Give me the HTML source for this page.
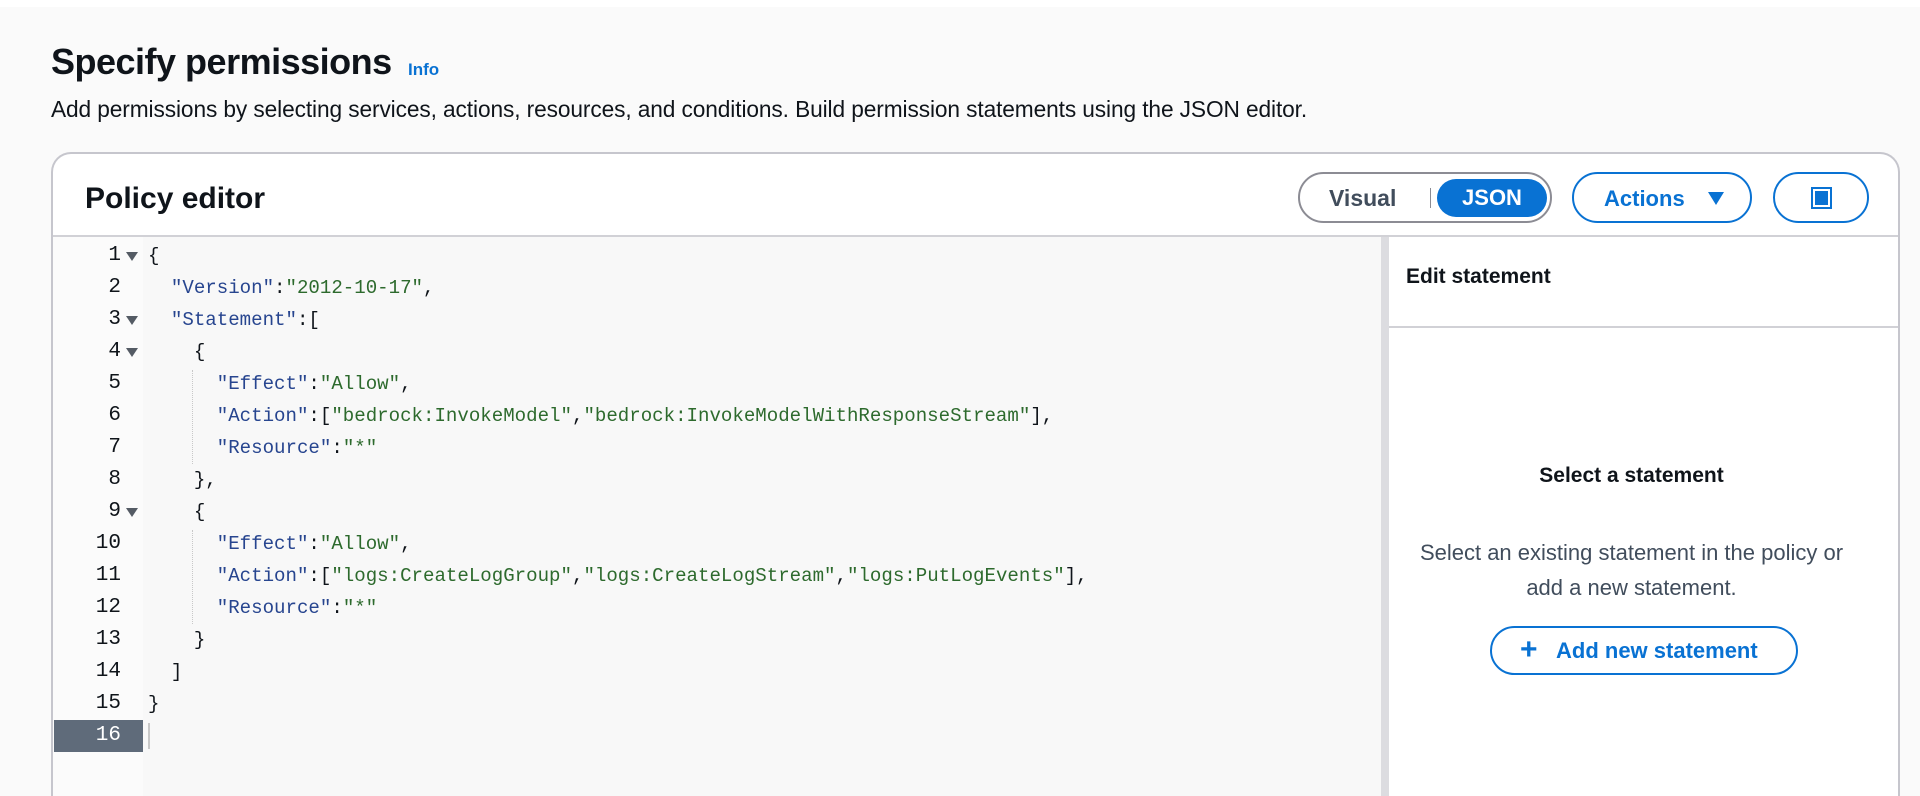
<!DOCTYPE html>
<html><head><meta charset="utf-8"><style>
*{margin:0;padding:0;box-sizing:border-box}
html,body{width:1920px;height:796px;overflow:hidden}
body{background:#fafafa;font-family:"Liberation Sans",sans-serif;color:#0f141a;position:relative}
.top{position:absolute;left:0;top:0;width:1920px;height:7px;background:#fff}
h1{position:absolute;left:51px;top:41px;font-size:36px;font-weight:bold;letter-spacing:-0.5px}
.info{position:absolute;left:408px;top:60px;font-size:17px;font-weight:bold;color:#0972d3}
.sub{position:absolute;left:51px;top:96px;font-size:22.7px;color:#0f141a;letter-spacing:-0.1px}
.panel{position:absolute;left:51px;top:152px;width:1849px;height:644px;background:#fff;border:2px solid #c6c6cd;border-bottom:none;border-radius:20px 20px 0 0;overflow:hidden}
.pt{position:absolute;left:32px;top:28px;font-size:30px;font-weight:bold}
.hdr{position:absolute;left:0;top:81px;width:100%;height:2px;background:#d1d1d6}
.tog{position:absolute;left:1245px;top:18px;width:254px;height:51px;border:2px solid #8c8c94;border-radius:26px}
.tog .v{position:absolute;left:29px;top:11px;font-size:23px;font-weight:bold;color:#414d5c}
.tog .sep{position:absolute;left:130px;top:14px;width:1px;height:20px;background:#8c8c94}
.tog .j{position:absolute;left:137px;top:5px;width:110px;height:38px;border-radius:19px;background:#0972d3;color:#fff;font-size:22px;font-weight:bold;text-align:center;line-height:38px}
.btn{position:absolute;top:18px;height:51px;border:2px solid #0972d3;border-radius:26px;color:#0972d3;font-weight:bold;font-size:22px}
.gut{position:absolute;left:0;top:83px;width:90px;height:562px;background:#fbfbfb}
.code{position:absolute;left:90px;top:83px;width:1238px;height:562px;background:#f8f8f8}
.sb{position:absolute;left:1328px;top:83px;width:8px;height:562px;background:#dcdce0}
.ln{position:absolute;left:0;width:68px;text-align:right;font-family:"Liberation Mono",monospace;font-size:21px;color:#0f141a;height:32px;line-height:32px}
.arr{position:absolute;left:73px;width:0;height:0;border-left:6px solid transparent;border-right:6px solid transparent;border-top:9px solid #545b64}
.cl{position:absolute;left:95px;font-family:"Liberation Mono",monospace;font-size:19.1px;height:32px;line-height:32px;white-space:pre;color:#0f141a}
.k{color:#27458f}.s{color:#2d6a2d}
.guide{position:absolute;left:139px;width:1px;border-left:1px dotted #c8c8c8}
.rp{position:absolute;left:1336px;top:83px;width:513px;height:562px;background:#fff}
</style></head><body>
<div class="top"></div>
<h1>Specify permissions</h1>
<div class="info">Info</div>
<div class="sub">Add permissions by selecting services, actions, resources, and conditions. Build permission statements using the JSON editor.</div>
<div class="panel">
<div class="pt">Policy editor</div>
<div class="tog"><span class="v">Visual</span><span class="sep"></span><span class="j">JSON</span></div>
<div class="btn" style="left:1519px;width:180px"><span style="position:absolute;left:30px;top:12px">Actions</span><span style="position:absolute;left:134px;top:18px;border-left:8px solid transparent;border-right:8px solid transparent;border-top:13px solid #0972d3"></span></div>
<div class="btn" style="left:1720px;width:96px"><span style="position:absolute;left:36px;top:13px;width:21px;height:22px;border:2px solid #0972d3"></span><span style="position:absolute;left:40px;top:17px;width:13px;height:14px;background:#0972d3"></span></div>
<div class="hdr"></div>
<div class="gut"></div>
<div class="code"></div>
<div class="sb"></div>
<div class="rp">
<div style="position:absolute;left:17px;top:28px;font-size:21px;font-weight:bold">Edit statement</div>
<div style="position:absolute;left:0;top:89px;width:100%;height:2px;background:#d1d1d6"></div>
<div style="position:absolute;left:0;top:227px;width:485px;text-align:center;font-size:21px;font-weight:bold">Select a statement</div>
<div style="position:absolute;left:0;top:298px;width:485px;text-align:center;font-size:22px;line-height:35px;color:#414d5c">Select an existing statement in the policy or<br>add a new statement.</div>
<div style="position:absolute;left:101px;top:389px;width:308px;height:49px;border:2px solid #0972d3;border-radius:25px;color:#0972d3;font-weight:bold;font-size:22px"><span style="position:absolute;left:28px;top:6px;font-size:30px;line-height:32px">+</span><span style="position:absolute;left:64px;top:10px">Add new statement</span></div>
</div>
<div style="position:absolute;left:1px;top:566px;width:89px;height:32px;background:#5f6b7a"></div>
<div style="position:absolute;left:95px;top:569px;width:2px;height:26px;background:#c8c8c8"></div>
<div class="ln" style="top:86px">1</div><div class="arr" style="top:98px"></div><div class="cl" style="top:86px">{</div>
<div class="ln" style="top:118px">2</div><div class="cl" style="top:118px">  <span class="k">"Version"</span>:<span class="s">"2012-10-17"</span>,</div>
<div class="ln" style="top:150px">3</div><div class="arr" style="top:162px"></div><div class="cl" style="top:150px">  <span class="k">"Statement"</span>:[</div>
<div class="ln" style="top:182px">4</div><div class="arr" style="top:194px"></div><div class="cl" style="top:182px">    {</div>
<div class="ln" style="top:214px">5</div><div class="cl" style="top:214px">      <span class="k">"Effect"</span>:<span class="s">"Allow"</span>,</div>
<div class="ln" style="top:246px">6</div><div class="cl" style="top:246px">      <span class="k">"Action"</span>:[<span class="s">"bedrock:InvokeModel"</span>,<span class="s">"bedrock:InvokeModelWithResponseStream"</span>],</div>
<div class="ln" style="top:278px">7</div><div class="cl" style="top:278px">      <span class="k">"Resource"</span>:<span class="s">"*"</span></div>
<div class="ln" style="top:310px">8</div><div class="cl" style="top:310px">    },</div>
<div class="ln" style="top:342px">9</div><div class="arr" style="top:354px"></div><div class="cl" style="top:342px">    {</div>
<div class="ln" style="top:374px">10</div><div class="cl" style="top:374px">      <span class="k">"Effect"</span>:<span class="s">"Allow"</span>,</div>
<div class="ln" style="top:406px">11</div><div class="cl" style="top:406px">      <span class="k">"Action"</span>:[<span class="s">"logs:CreateLogGroup"</span>,<span class="s">"logs:CreateLogStream"</span>,<span class="s">"logs:PutLogEvents"</span>],</div>
<div class="ln" style="top:438px">12</div><div class="cl" style="top:438px">      <span class="k">"Resource"</span>:<span class="s">"*"</span></div>
<div class="ln" style="top:470px">13</div><div class="cl" style="top:470px">    }</div>
<div class="ln" style="top:502px">14</div><div class="cl" style="top:502px">  ]</div>
<div class="ln" style="top:534px">15</div><div class="cl" style="top:534px">}</div>
<div class="ln" style="top:566px;color:#fff">16</div>
<div class="guide" style="top:216px;height:94px"></div>
<div class="guide" style="top:376px;height:94px"></div>
</div>
</body></html>
